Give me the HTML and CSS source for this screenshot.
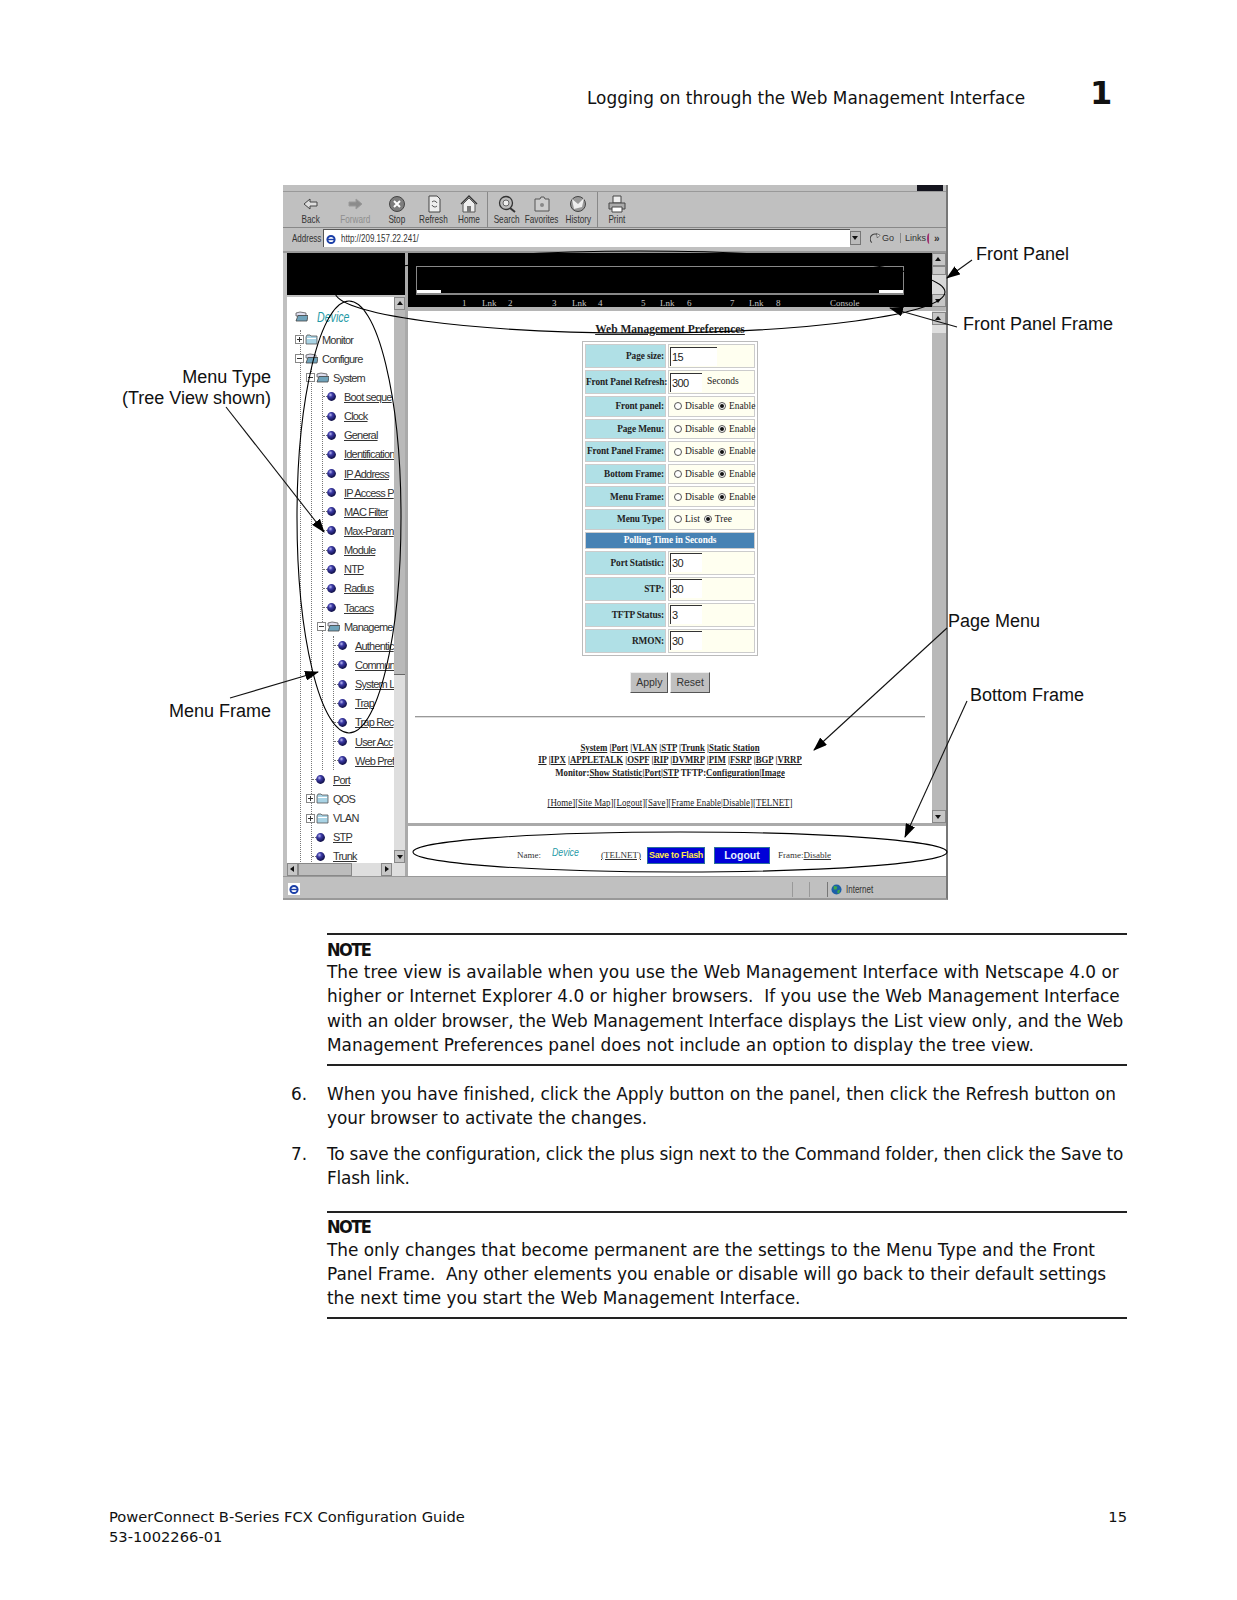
FILE: index.html
```html
<!DOCTYPE html>
<html lang="en">
<head>
    <meta charset="UTF-8">
    <title>Logging on through the Web Management Interface</title>
    <link rel="stylesheet" href="styles.css">
</head>
<body>
<svg class="defs" width="0" height="0">
    <defs>
        <radialGradient id="ballfill" cx="38%" cy="32%" r="70%">
            <stop offset="0" stop-color="#b9b9ee"/>
            <stop offset="0.35" stop-color="#3c3aa6"/>
            <stop offset="1" stop-color="#0c0c40"/>
        </radialGradient>
        <symbol id="ball" viewBox="0 0 9 9"><circle cx="4.5" cy="4.5" r="4.4" fill="url(#ballfill)"/></symbol>
        <symbol id="folder" viewBox="0 0 13 11"><path d="M1 3 L1 10 L12 10 L12 2 L6 2 L5 1 L2 1 Z" fill="#a9d3e4" stroke="#555" stroke-width="0.8"/><path d="M2 4.5 H11" stroke="#fff"/></symbol>
        <symbol id="folderopen" viewBox="0 0 13 11"><path d="M1 2 L5 1 L11 2 L11 5 L1 5 Z" fill="#dde" stroke="#555" stroke-width="0.8"/><path d="M1 10 L12 10 L13 4.5 L3 4.5 Z" fill="#6fa3bb" stroke="#444" stroke-width="0.8"/></symbol>
        <symbol id="plus" viewBox="0 0 9 9"><rect x="0.5" y="0.5" width="8" height="8" fill="#fff" stroke="#888"/><path d="M2 4.5 H7 M4.5 2 V7" stroke="#333"/></symbol>
        <symbol id="minus" viewBox="0 0 9 9"><rect x="0.5" y="0.5" width="8" height="8" fill="#fff" stroke="#888"/><path d="M2 4.5 H7" stroke="#333"/></symbol>
        <symbol id="back" viewBox="0 0 20 18"><path d="M3 9 L9 4 V7 H16 V11 H9 V14 Z" fill="#ddd" stroke="#444"/></symbol>
        <symbol id="forward" viewBox="0 0 20 18"><path d="M17 9 L11 4 V7 H4 V11 H11 V14 Z" fill="#8c8c8c" stroke="#9a9a9a"/></symbol>
        <symbol id="stop" viewBox="0 0 20 18"><circle cx="10" cy="9" r="7.5" fill="#7d7d7d" stroke="#444"/><path d="M7 6 L13 12 M13 6 L7 12" stroke="#fff" stroke-width="2"/></symbol>
        <symbol id="refresh" viewBox="0 0 20 18"><path d="M5 1 H13 L16 4 V17 H5 Z" fill="#eee" stroke="#444"/><path d="M8 7 A3 3 0 0 1 13 8 M13 11 A3 3 0 0 1 8 10" fill="none" stroke="#555"/></symbol>
        <symbol id="home" viewBox="0 0 20 18"><path d="M2 9 L10 1 L18 9" fill="none" stroke="#333" stroke-width="1.4"/><path d="M4 9 L10 3 L16 9 V17 H4 Z" fill="#eee" stroke="#555"/><rect x="8" y="11" width="4" height="6" fill="#777"/></symbol>
        <symbol id="search" viewBox="0 0 20 18"><circle cx="9" cy="8" r="6.5" fill="#bbb" stroke="#333" stroke-width="1.3"/><circle cx="9" cy="8" r="3" fill="#eee" stroke="#666"/><path d="M13 13 L18 17" stroke="#333" stroke-width="2"/></symbol>
        <symbol id="favorites" viewBox="0 0 20 18"><path d="M3 4 H8 L9 2 H12 L13 4 H17 V16 H3 Z" fill="#ccc" stroke="#555"/><circle cx="10" cy="10" r="2" fill="#888"/></symbol>
        <symbol id="history" viewBox="0 0 20 18"><circle cx="10" cy="9" r="7.5" fill="#999" stroke="#444"/><path d="M4 4 L10 9 L16 3 L14 12 L6 14 Z" fill="#eee"/></symbol>
        <symbol id="print" viewBox="0 0 20 18"><path d="M6 1 H14 V8 H6 Z" fill="#eee" stroke="#444"/><path d="M2 8 H18 V14 H2 Z" fill="#aaa" stroke="#444"/><path d="M5 12 H15 V17 H5 Z" fill="#fff" stroke="#444"/></symbol>
        <symbol id="ie" viewBox="0 0 12 12"><rect width="12" height="12" fill="#fff"/><circle cx="6" cy="6.5" r="3.6" fill="none" stroke="#1b3fa8" stroke-width="2"/><path d="M3 6.5 H9" stroke="#1b3fa8" stroke-width="1.4"/></symbol>
        <symbol id="globe" viewBox="0 0 12 12"><circle cx="6" cy="6" r="5.5" fill="#1c5fa8"/><path d="M3 2 L7 3 L6 6 L3 6 Z M7 7 L10 6 L9 10 L7 10 Z" fill="#3fa84a"/></symbol>
        <symbol id="goarrow" viewBox="0 0 12 12"><path d="M2 11 A5 5 0 0 1 9 3" fill="none" stroke="#444" stroke-width="1.2"/><path d="M7 1 L11 3 L8 6 Z" fill="#ddd" stroke="#444" stroke-width="0.7"/></symbol>
    </defs>
</svg>
<div class="page">
    <header class="running-head">
        <span class="head-title">Logging on through the Web Management Interface</span>
        <span class="head-num">1</span>
    </header>

    <div class="figure">
        <div class="shot">
            <div class="title-strip"><span class="throbber"></span></div>
            <div class="toolbar">
                <div class="tool"><svg><use href="#back"/></svg><span>Back</span></div>
                <div class="tool off"><svg><use href="#forward"/></svg><span>Forward</span></div>
                <div class="tool"><svg><use href="#stop"/></svg><span>Stop</span></div>
                <div class="tool"><svg><use href="#refresh"/></svg><span>Refresh</span></div>
                <div class="tool"><svg><use href="#home"/></svg><span>Home</span></div>
                <div class="tool sep"><svg><use href="#search"/></svg><span>Search</span></div>
                <div class="tool"><svg><use href="#favorites"/></svg><span>Favorites</span></div>
                <div class="tool"><svg><use href="#history"/></svg><span>History</span></div>
                <div class="tool sep"><svg><use href="#print"/></svg><span>Print</span></div>
            </div>
            <div class="addressbar">
                <span class="addr-label">Address</span>
                <div class="addr-box"><svg class="addr-ie"><use href="#ie"/></svg><span>http://209.157.22.241/</span></div>
                <span class="addr-drop"></span>
                <span class="addr-go"><svg><use href="#goarrow"/></svg>Go</span>
                <span class="addr-links">Links</span>
                <span class="addr-ring"></span>
                <span class="addr-more">»</span>
            </div>

            <div class="frames">
                <div class="left-col">
                    <div class="black-top"></div>
                    <div class="tree-frame">
                        <div class="tree-main">
                            <div class="tree">
                                <div class="device-row"><svg class="folder"><use href="#folderopen"/></svg><span class="device">Device</span></div>
                                <ul>
                                    <li><div class="row"><svg class="box"><use href="#plus"/></svg><svg class="folder"><use href="#folder"/></svg><span>Monitor</span></div></li>
                                    <li><div class="row"><svg class="box"><use href="#minus"/></svg><svg class="folder"><use href="#folderopen"/></svg><span>Configure</span></div>
                                        <ul>
                                            <li><div class="row"><svg class="box"><use href="#minus"/></svg><svg class="folder"><use href="#folderopen"/></svg><span>System</span></div>
                                                <ul>
                                                    <li><div class="row leaf"><svg class="ball"><use href="#ball"/></svg><a>Boot seque</a></div></li>
                                                    <li><div class="row leaf"><svg class="ball"><use href="#ball"/></svg><a>Clock</a></div></li>
                                                    <li><div class="row leaf"><svg class="ball"><use href="#ball"/></svg><a>General</a></div></li>
                                                    <li><div class="row leaf"><svg class="ball"><use href="#ball"/></svg><a>Identification</a></div></li>
                                                    <li><div class="row leaf"><svg class="ball"><use href="#ball"/></svg><a>IP Address</a></div></li>
                                                    <li><div class="row leaf"><svg class="ball"><use href="#ball"/></svg><a>IP Access P</a></div></li>
                                                    <li><div class="row leaf"><svg class="ball"><use href="#ball"/></svg><a>MAC Filter</a></div></li>
                                                    <li><div class="row leaf"><svg class="ball"><use href="#ball"/></svg><a>Max-Param</a></div></li>
                                                    <li><div class="row leaf"><svg class="ball"><use href="#ball"/></svg><a>Module</a></div></li>
                                                    <li><div class="row leaf"><svg class="ball"><use href="#ball"/></svg><a>NTP</a></div></li>
                                                    <li><div class="row leaf"><svg class="ball"><use href="#ball"/></svg><a>Radius</a></div></li>
                                                    <li><div class="row leaf"><svg class="ball"><use href="#ball"/></svg><a>Tacacs</a></div></li>
                                                    <li><div class="row"><svg class="box"><use href="#minus"/></svg><svg class="folder"><use href="#folderopen"/></svg><span>Manageme</span></div>
                                                        <ul>
                                                            <li><div class="row leaf"><svg class="ball"><use href="#ball"/></svg><a>Authentic</a></div></li>
                                                            <li><div class="row leaf"><svg class="ball"><use href="#ball"/></svg><a>Commun</a></div></li>
                                                            <li><div class="row leaf"><svg class="ball"><use href="#ball"/></svg><a>System L</a></div></li>
                                                            <li><div class="row leaf"><svg class="ball"><use href="#ball"/></svg><a>Trap</a></div></li>
                                                            <li><div class="row leaf"><svg class="ball"><use href="#ball"/></svg><a>Trap Rec</a></div></li>
                                                            <li><div class="row leaf"><svg class="ball"><use href="#ball"/></svg><a>User Acc</a></div></li>
                                                            <li><div class="row leaf"><svg class="ball"><use href="#ball"/></svg><a>Web Pref</a></div></li>
                                                        </ul>
                                                    </li>
                                                </ul>
                                            </li>
                                            <li><div class="row leaf"><svg class="ball"><use href="#ball"/></svg><a>Port</a></div></li>
                                            <li><div class="row"><svg class="box"><use href="#plus"/></svg><svg class="folder"><use href="#folder"/></svg><span>QOS</span></div></li>
                                            <li><div class="row"><svg class="box"><use href="#plus"/></svg><svg class="folder"><use href="#folder"/></svg><span>VLAN</span></div></li>
                                            <li><div class="row leaf"><svg class="ball"><use href="#ball"/></svg><a>STP</a></div></li>
                                            <li><div class="row leaf"><svg class="ball"><use href="#ball"/></svg><a>Trunk</a></div></li>
                                        </ul>
                                    </li>
                                </ul>
                            </div>
                            <div class="tree-scroll">
                                <span class="arrow-btn up"></span>
                                <span class="tree-thumb"></span>
                                <span class="arrow-btn down"></span>
                            </div>
                        </div>
                        <div class="tree-hscroll">
                            <span class="arrow-btn left"></span>
                            <span class="hthumb"></span>
                            <span class="arrow-btn right"></span>
                        </div>
                    </div>
                </div>

                <div class="right-col">
                    <div class="panel-frame">
                        <div class="panel-black">
                            <div class="panel-box"><span class="led"></span><span class="led"></span></div>
                            <div class="ports">
                                <span>1</span><span>Lnk</span><span>2</span>
                                <span>3</span><span>Lnk</span><span>4</span>
                                <span>5</span><span>Lnk</span><span>6</span>
                                <span>7</span><span>Lnk</span><span>8</span>
                                <span>Console</span>
                            </div>
                        </div>
                        <div class="panel-scroll">
                            <span class="arrow-btn up"></span>
                            <span class="panel-thumb"></span>
                            <span class="arrow-btn down"></span>
                        </div>
                    </div>

                    <div class="main-frame">
                        <div class="main-content">
                            <h3 class="prefs-title">Web Management Preferences</h3>
                            <table class="prefs">
                                <tbody>
                                    <tr class="tall"><th>Page size:</th><td><span class="field wide">15</span></td></tr>
                                    <tr class="tall"><th>Front Panel Refresh:</th><td><span class="field">300</span><span class="unit">Seconds</span></td></tr>
                                    <tr><th>Front panel:</th><td><span class="radio"></span>Disable<span class="radio on"></span>Enable</td></tr>
                                    <tr><th>Page Menu:</th><td><span class="radio"></span>Disable<span class="radio on"></span>Enable</td></tr>
                                    <tr><th>Front Panel Frame:</th><td><span class="radio"></span>Disable<span class="radio on"></span>Enable</td></tr>
                                    <tr><th>Bottom Frame:</th><td><span class="radio"></span>Disable<span class="radio on"></span>Enable</td></tr>
                                    <tr><th>Menu Frame:</th><td><span class="radio"></span>Disable<span class="radio on"></span>Enable</td></tr>
                                    <tr><th>Menu Type:</th><td><span class="radio"></span>List<span class="radio on"></span>Tree</td></tr>
                                    <tr class="heading"><th colspan="2">Polling Time in Seconds</th></tr>
                                    <tr class="tall"><th>Port Statistic:</th><td><span class="field">30</span></td></tr>
                                    <tr class="tall"><th>STP:</th><td><span class="field">30</span></td></tr>
                                    <tr class="tall"><th>TFTP Status:</th><td><span class="field">3</span></td></tr>
                                    <tr class="tall"><th>RMON:</th><td><span class="field">30</span></td></tr>
                                </tbody>
                            </table>
                            <div class="form-btns"><span class="btn">Apply</span><span class="btn">Reset</span></div>
                            <hr class="rule">
                            <div class="linkblock">
                                <p><u>System</u> |<u>Port</u> |<u>VLAN</u> |<u>STP</u> |<u>Trunk</u> |<u>Static Station</u></p>
                                <p><u>IP</u> |<u>IPX</u> |<u>APPLETALK</u> |<u>OSPF</u> |<u>RIP</u> |<u>DVMRP</u> |<u>PIM</u> |<u>FSRP</u> |<u>BGP</u> |<u>VRRP</u></p>
                                <p>Monitor:<u>Show Statistic</u>|<u>Port</u>|<u>STP</u> TFTP:<u>Configuration</u>|<u>Image</u></p>
                            </div>
                            <p class="homelinks"><u>[Home]</u>[<u>Site Map</u>][<u>Logout</u>][<u>Save</u>][<u>Frame Enable</u>|<u>Disable</u>][<u>TELNET</u>]</p>
                        </div>
                        <div class="main-scroll">
                            <span class="arrow-btn up"></span>
                            <span class="main-thumb"></span>
                            <span class="arrow-btn down"></span>
                        </div>
                    </div>

                    <div class="bottom-frame">
                        <span class="b-name">Name:</span>
                        <span class="b-device">Device</span>
                        <u class="b-telnet">(TELNET)</u>
                        <span class="b-btn flash">Save to Flash</span>
                        <span class="b-btn logout">Logout</span>
                        <span class="b-frame">Frame:<u>Disable</u></span>
                    </div>
                </div>
            </div>

            <div class="statusbar">
                <svg class="status-ie"><use href="#ie"/></svg>
                <span class="status-cell first"></span>
                <span class="status-cell"></span>
                <span class="status-zone"><svg class="status-globe"><use href="#globe"/></svg><span class="status-text">Internet</span></span>
            </div>
        </div>

        <svg class="overlay" viewBox="0 0 1237 715">
            <defs>
                <marker id="head" markerWidth="14" markerHeight="10" refX="13" refY="5" orient="auto" markerUnits="userSpaceOnUse">
                    <path d="M0 0 L14 5 L0 10 Z" fill="#000"/>
                </marker>
            </defs>
            <ellipse cx="349" cy="332" rx="52" ry="216" fill="none" stroke="#000" stroke-width="1.1"/>
            <ellipse cx="680" cy="667" rx="267" ry="20" fill="none" stroke="#000" stroke-width="1.1"/>
            <ellipse cx="640" cy="107" rx="305" ry="41" fill="none" stroke="#000" stroke-width="1.1"/>
            <path d="M972 75 L947 93" stroke="#111" stroke-width="1.1" marker-end="url(#head)"/>
            <path d="M957 142 L890 123" stroke="#111" stroke-width="1.1" marker-end="url(#head)"/>
            <path d="M226 222 L324 347" stroke="#111" stroke-width="1.1" marker-end="url(#head)"/>
            <path d="M230 513 L318 487" stroke="#111" stroke-width="1.1" marker-end="url(#head)"/>
            <path d="M947 443 L814 565" stroke="#111" stroke-width="1.1" marker-end="url(#head)"/>
            <path d="M967 516 L905 652" stroke="#111" stroke-width="1.1" marker-end="url(#head)"/>
        </svg>
        <span class="callout c-panel">Front Panel</span>
        <span class="callout c-panelframe">Front Panel Frame</span>
        <span class="callout c-type">Menu Type<br>(Tree View shown)</span>
        <span class="callout c-menu">Menu Frame</span>
        <span class="callout c-page">Page Menu</span>
        <span class="callout c-bottom">Bottom Frame</span>
    </div>

    <section class="note first-note">
        <h4>NOTE</h4>
        <p>The tree view is available when you use the Web Management Interface with Netscape 4.0 or<br>
        higher or Internet Explorer 4.0 or higher browsers.&nbsp; If you use the Web Management Interface<br>
        <span class="tight">with an older browser, the Web Management Interface displays the List view only, and the Web</span><br>
        Management Preferences panel does not include an option to display the tree view.</p>
    </section>

    <ol class="steps">
        <li><span class="step-num">6.</span><p class="snug">When you have finished, click the Apply button on the panel, then click the Refresh button on<br>your browser to activate the changes.</p></li>
        <li><span class="step-num">7.</span><p class="tighter">To save the configuration, click the plus sign next to the Command folder, then click the Save to<br>Flash link.</p></li>
    </ol>

    <section class="note last-note">
        <h4>NOTE</h4>
        <p>The only changes that become permanent are the settings to the Menu Type and the Front<br>
        <span class="snug">Panel Frame.&nbsp; Any other elements you enable or disable will go back to their default settings</span><br>
        the next time you start the Web Management Interface.</p>
    </section>

    <footer class="page-foot">
        <div>PowerConnect B-Series FCX Configuration Guide<br>53-1002266-01</div>
        <div>15</div>
    </footer>
</div>
</body>
</html>
```

FILE: styles.css
```css
*{
    box-sizing: border-box;
    margin: 0;
    padding: 0;
}
body{
    background-color: #fff;
    color: #111;
    font-family: "DejaVu Sans", sans-serif;
}
.defs{
    position: absolute;
}
.page{
    display: flex;
    flex-direction: column;
    width: 1237px;
    height: 1600px;
}

/* running head */
.running-head{
    display: flex;
    align-items: flex-start;
    height: 185px;
    padding: 72px 0 0 587px;
}
.head-title{
    width: 503px;
    margin-top: 16px;
    font-size: 16.9px;
}
.head-num{
    font-size: 32px;
    font-weight: bold;
    line-height: 42px;
}

/* figure */
.figure{
    position: relative;
    width: 1237px;
    height: 715px;
    flex: none;
    padding-left: 283px;
}
.overlay{
    position: absolute;
    left: 0;
    top: 0;
    width: 1237px;
    height: 715px;
    pointer-events: none;
}
.callout{
    position: absolute;
    font-family: "Liberation Sans", Arial, sans-serif;
    font-size: 18px;
    line-height: 21px;
    color: #111;
}
.c-panel{ left: 976px; top: 59px; }
.c-panelframe{ left: 963px; top: 129px; }
.c-type{ right: 966px; top: 182px; text-align: right; }
.c-menu{ right: 966px; top: 516px; }
.c-page{ left: 948px; top: 426px; }
.c-bottom{ left: 970px; top: 500px; }

/* browser window */
.shot{
    display: flex;
    flex-direction: column;
    width: 665px;
    height: 715px;
    background-color: #c0c0c0;
    border-right: 2px solid #777;
    border-bottom: 2px solid #999;
    font-family: "Liberation Sans", Arial, sans-serif;
    color: #333;
}
.title-strip{
    display: flex;
    justify-content: flex-end;
    height: 7px;
    border-bottom: 1px solid #999;
    padding-right: 3px;
}
.throbber{
    width: 26px;
    height: 6px;
    background-color: #14141e;
}
.toolbar{
    display: grid;
    grid-template-columns: 44px 44px 39px 35px 36px 38px 34px 38px 38px;
    height: 36px;
    padding-left: 6px;
    border-bottom: 1px solid #888;
}
.tool{
    display: flex;
    flex-direction: column;
    align-items: center;
    padding-top: 3px;
    font-size: 10.5px;
    line-height: 12px;
}
.tool span{
    transform: scaleX(0.78);
}
.tool svg{
    width: 20px;
    height: 18px;
}
.tool.off{
    color: #8e8e8e;
}
.tool.sep{
    border-left: 1px solid #888;
}
.addressbar{
    display: flex;
    align-items: center;
    height: 25px;
    padding: 0 0 3px 9px;
    border-bottom: 2px solid #999;
    font-size: 10px;
}
.addr-label{
    width: 31px;
    flex: none;
    transform: scaleX(0.8);
    transform-origin: left;
}
.addr-box{
    display: flex;
    align-items: center;
    gap: 4px;
    width: 527px;
    height: 18px;
    padding-left: 1px;
    background-color: #fff;
    border-top: 1px solid #555;
    border-left: 1px solid #555;
}
.addr-box span{
    transform: scaleX(0.8);
    transform-origin: left;
}
.addr-ie{
    width: 12px;
    height: 12px;
}
.addr-drop{
    position: relative;
    width: 11px;
    height: 14px;
    background-color: #bbb;
    border: 1px solid #777;
}
.addr-drop::after{
    content: "";
    position: absolute;
    left: 1px;
    top: 4px;
    border: 3px solid transparent;
    border-top: 4px solid #111;
}
.addr-go{
    display: flex;
    align-items: center;
    gap: 1px;
    width: 39px;
    padding-left: 9px;
    font-size: 9px;
}
.addr-go svg{
    width: 11px;
    height: 12px;
}
.addr-links{
    width: 27px;
    padding-left: 4px;
    border-left: 1px solid #888;
    font-size: 9px;
}
.addr-ring{
    width: 5px;
    height: 11px;
    margin-right: 2px;
    border-left: 2px solid #a03070;
    border-radius: 50%;
}
.addr-more{
    font-weight: bold;
}
.frames{
    display: flex;
    height: 623px;
    flex: none;
    padding-left: 4px;
}
.left-col{
    display: flex;
    flex-direction: column;
    width: 121px;
    border-right: 3px solid #aaa;
}
.black-top{
    height: 42px;
    background-color: #000;
    flex: none;
}
.tree-frame{
    display: flex;
    flex-direction: column;
    flex: 1;
    margin-top: 2px;
    min-height: 0;
}
.tree-main{
    display: flex;
    flex: 1;
    min-height: 0;
}
.tree{
    width: 107px;
    overflow: hidden;
    padding-left: 13px;
    background-color: #fff;
    font-size: 11px;
    letter-spacing: -0.8px;
    white-space: nowrap;
}
.tree ul{
    list-style: none;
    border-left: 1px dotted #777;
}
.tree ul ul{
    margin-left: 10px;
}
.device-row{
    display: flex;
    align-items: center;
    height: 33px;
    margin-left: -6px;
    padding-top: 6px;
}
.device{
    margin-left: 5px;
    font-size: 14px;
    font-style: italic;
    letter-spacing: 0;
    color: #1f9aa6;
    transform: scaleX(0.76);
    transform-origin: left;
}
.row{
    display: flex;
    align-items: center;
    height: 19.15px;
    margin-left: -6px;
}
.row.leaf{
    margin-left: 0;
}
.row.leaf::before{
    content: "";
    width: 4px;
    flex: none;
    border-top: 1px dotted #777;
}
.row a{
    text-decoration: underline;
}
.box{
    width: 9px;
    height: 9px;
    flex: none;
}
.folder{
    width: 13px;
    height: 11px;
    flex: none;
    margin: 0 4px 0 1px;
}
.ball{
    width: 9px;
    height: 9px;
    flex: none;
    margin-right: 8px;
}
.tree-scroll, .panel-scroll, .main-scroll{
    display: flex;
    flex-direction: column;
    width: 11px;
    flex: none;
    background-color: #dedede;
}
.tree-thumb{
    height: 365px;
    background-color: #b9b9b9;
    border-bottom: 1px solid #666;
}
.panel-thumb{
    height: 9px;
    background-color: #c8c8c8;
    border: 1px solid #888;
}
.main-thumb{
    flex: 1;
    margin-top: 8px;
    background-color: #b9b9b9;
}
.arrow-btn{
    position: relative;
    display: block;
    width: 11px;
    height: 13px;
    flex: none;
    background-color: #c6c6c6;
    border: 1px solid #888;
}
.arrow-btn::after{
    content: "";
    position: absolute;
    left: 2px;
    top: 3px;
    border: 3px solid transparent;
}
.arrow-btn.up::after{ border-bottom: 4px solid #111; top: 0; }
.arrow-btn.down::after{ border-top: 4px solid #111; top: 4px; }
.arrow-btn.left::after{ border-right: 4px solid #111; left: -1px; top: 2px; }
.arrow-btn.right::after{ border-left: 4px solid #111; left: 3px; top: 2px; }
.down{
    margin-top: auto;
}
.tree-hscroll{
    display: flex;
    height: 13px;
    flex: none;
    background-color: #dedede;
}
.hthumb{
    width: 54px;
    background-color: #bcbcbc;
    border: 1px solid #888;
}
.tree-hscroll .right{
    margin-left: 29px;
}
.right-col{
    display: flex;
    flex-direction: column;
    width: 538px;
}
.panel-frame{
    display: flex;
    height: 58px;
    flex: none;
    border-bottom: 4px solid #b5b5b5;
    background-color: #000;
}
.panel-black{
    width: 524px;
    padding: 13px 0 0 8px;
    font-family: "Liberation Serif", serif;
    font-size: 9px;
    color: #c4c4c4;
}
.panel-box{
    display: flex;
    justify-content: space-between;
    align-items: flex-end;
    width: 488px;
    height: 29px;
    border-top: 1px solid #888;
    border-left: 1px solid #888;
    border-right: 1px solid #888;
    border-bottom: 2px solid #888;
}
.led{
    width: 24px;
    height: 3px;
    background-color: #fff;
}
.ports{
    display: grid;
    grid-template-columns: 20px 26px 44px 20px 26px 43px 19px 27px 43px 19px 27px 54px auto;
    padding: 3px 0 0 46px;
    line-height: 11px;
}
.panel-scroll{
    width: 14px;
    background-color: #d8d8d8;
}
.panel-scroll .arrow-btn, .main-scroll .arrow-btn{
    width: 14px;
}
.main-frame{
    display: flex;
    height: 512px;
    flex: none;
    background-color: #fff;
}
.main-content{
    width: 524px;
    font-family: "Liberation Serif", serif;
    color: #222;
    text-align: center;
}
.main-scroll{
    width: 14px;
    padding-top: 1px;
}
.prefs-title{
    margin-top: 11px;
    font-size: 11.5px;
    line-height: 14px;
    text-decoration: underline;
}
.prefs{
    width: 176px;
    margin: 5px auto 0;
    border: 1px solid #bbb;
    border-collapse: separate;
    border-spacing: 2px;
    table-layout: fixed;
    font-size: 9.5px;
}
.prefs th{
    width: 81px;
    height: 20.6px;
    padding-right: 1px;
    background-color: #b0e0e6;
    border: 1px solid #ccc;
    font-size: 9.3px;
    font-weight: bold;
    text-align: right;
    white-space: nowrap;
    letter-spacing: -0.1px;
}
.prefs td{
    padding-left: 1px;
    background-color: #fffff0;
    border: 1px solid #ccc;
    text-align: left;
    white-space: nowrap;
}
.prefs .tall th{
    height: 24px;
}
.prefs .heading th{
    height: 17px;
    padding: 0;
    background-color: #4682b4;
    color: #fff;
    text-align: center;
}
.field{
    display: inline-block;
    width: 32px;
    height: 19px;
    padding-left: 1px;
    border-top: 1px solid #333;
    border-left: 1px solid #333;
    background-color: #fff;
    font-family: "Liberation Sans", sans-serif;
    font-size: 11px;
    letter-spacing: -0.6px;
    line-height: 19px;
    vertical-align: middle;
}
.field.wide{
    width: 47px;
}
.unit{
    margin-left: 5px;
}
.radio{
    position: relative;
    display: inline-block;
    width: 8px;
    height: 8px;
    margin: 0 3px 1px 4px;
    background-color: #fff;
    border: 1px solid #555;
    border-radius: 50%;
    vertical-align: middle;
}
.radio.on::after{
    content: "";
    position: absolute;
    left: 1px;
    top: 1px;
    width: 4px;
    height: 4px;
    border-radius: 50%;
    background-color: #111;
}
.form-btns{
    display: flex;
    justify-content: center;
    gap: 2px;
    margin-top: 16px;
}
.btn{
    height: 21px;
    padding: 0 5px;
    background-color: #c0c0c0;
    border-right: 1px solid #555;
    border-bottom: 1px solid #555;
    border-top: 1px solid #eee;
    border-left: 1px solid #eee;
    font-family: "Liberation Sans", sans-serif;
    font-size: 10.5px;
    line-height: 19px;
    color: #333;
}
.rule{
    width: 510px;
    margin: 23px auto 0;
    border: none;
    border-top: 1px solid #999;
    border-bottom: 1px solid #ddd;
}
.linkblock{
    margin-top: 24px;
    font-size: 10px;
    font-weight: bold;
    line-height: 12.9px;
    transform: scaleX(0.88);
}
.homelinks{
    margin-top: 16px;
    font-size: 10px;
    line-height: 13px;
    transform: scaleX(0.89);
}
.bottom-frame{
    display: flex;
    align-items: center;
    height: 53px;
    flex: none;
    padding: 8px 0 0 109px;
    background-color: #fff;
    border-top: 3px solid #aaa;
    font-family: "Liberation Serif", serif;
    font-size: 9px;
}
.b-name{
    width: 35px;
}
.b-device{
    width: 49px;
    margin-top: -6px;
    font-family: "Liberation Sans", sans-serif;
    font-size: 11px;
    font-style: italic;
    color: #1f9aa6;
    transform: scaleX(0.8);
    transform-origin: left;
}
.b-telnet{
    width: 46px;
}
.b-btn{
    height: 17px;
    background-color: #0000d8;
    border: 1px solid #2a6f9a;
    font-family: "Liberation Sans", sans-serif;
    font-weight: bold;
    line-height: 15px;
    text-align: center;
    white-space: nowrap;
}
.flash{
    width: 58px;
    color: #ffe94a;
    font-size: 9px;
    letter-spacing: -0.3px;
}
.logout{
    width: 56px;
    margin: 0 8px 0 9px;
    color: #e8f0ff;
    font-size: 10.5px;
}
.statusbar{
    display: flex;
    align-items: center;
    flex: 1;
    padding: 3px 0 0 5px;
    border-top: 1px solid #999;
    font-size: 10px;
}
.status-ie{
    width: 12px;
    height: 12px;
    margin-right: 492px;
}
.status-cell{
    width: 18px;
    height: 15px;
    border-left: 1px solid #999;
}
.status-cell.first{
    width: 17px;
}
.status-zone{
    display: flex;
    align-items: center;
    gap: 4px;
    padding-left: 3px;
    border-left: 1px solid #777;
    height: 15px;
}
.status-text{
    transform: scaleX(0.8);
    transform-origin: left;
}
.status-globe{
    width: 11px;
    height: 11px;
}

/* document text */
.note{
    width: 800px;
    margin-left: 327px;
    border-top: 2px solid #222;
    border-bottom: 2px solid #222;
    font-size: 16.9px;
}
.note p{
    margin-top: -3.5px;
    white-space: nowrap;
}
.note h4{
    font-size: 18px;
    line-height: 26px;
    font-stretch: condensed;
    letter-spacing: -1.5px;
}
.first-note{
    margin-top: 33px;
    padding-top: 2px;
    padding-bottom: 6px;
    line-height: 24.6px;
}
.last-note{
    padding-top: 1px;
    padding-bottom: 6px;
    line-height: 23.8px;
}
.last-note p{
    margin-top: -0.5px;
}
.steps{
    list-style: none;
    margin: 16px 0 9px 291px;
    font-size: 16.9px;
    line-height: 24.5px;
    white-space: nowrap;
}
.steps li{
    display: flex;
    margin-bottom: 11px;
}
.step-num{
    width: 36px;
    flex: none;
}
.snug{
    letter-spacing: -0.045px;
}
.tight{
    letter-spacing: -0.12px;
}
.tighter{
    letter-spacing: -0.19px;
}
.page-foot{
    display: flex;
    justify-content: space-between;
    width: 1018px;
    margin: auto 0 53px 109px;
    font-size: 14.7px;
    line-height: 20px;
}
```
